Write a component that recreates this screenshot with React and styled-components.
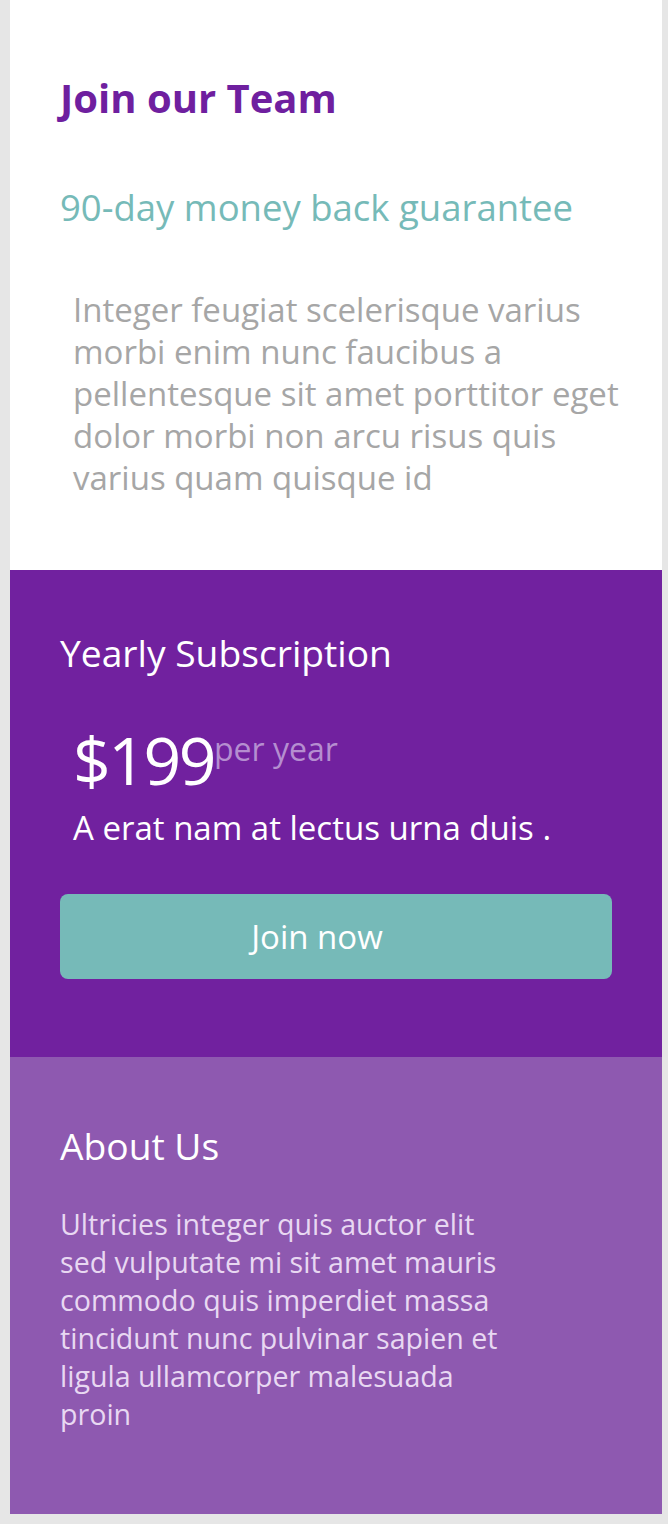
import React from 'react'
import styled, { createGlobalStyle } from 'styled-components'

const GlobalStyle = createGlobalStyle`
  html, body {
    margin: 0;
    padding: 0;
    background-color: #E6E6E6;
  }
  body {
    font-family: 'Open Sans', 'Noto Sans', sans-serif;
  }
`

const Page = styled.div`
  padding: 0 6px 10px 10px;
`

const Card = styled.main`
  background-color: #FFFFFF;
`

const Section = styled.section`
  background-color: ${props => props.bg || '#FFFFFF'};
  padding: ${props => props.pad || '0 50px'};
`

const Title = styled.h1`
  color: #6F1F9F;
  font-size: 40px;
  font-weight: 700;
  line-height: 50px;
  margin: 0;
`

const Subtitle = styled.h2`
  color: #76BAB8;
  font-size: 36.5px;
  font-weight: 400;
  line-height: 44px;
  margin: 62px 0 0;
`

const Lead = styled.p`
  color: #A6A6A6;
  font-size: 33px;
  line-height: 42px;
  margin: 60px -14px 0 0;
  padding: 0 0 0 13px;
`

const Heading = styled.h3`
  color: #FFFFFF;
  font-size: 37.2px;
  font-weight: 400;
  line-height: 44px;
  margin: 0;
`

const PriceRow = styled.div`
  display: flex;
  align-items: flex-start;
  margin: 48px 0 0 13px;
`

const Price = styled.span`
  color: #FFFFFF;
  font-size: 66px;
  line-height: 72px;
  letter-spacing: -2.5px;
`

const Period = styled.span`
  color: #B58ED0;
  font-size: 32px;
  line-height: 40px;
  margin-top: 6px;
`

const Note = styled.p`
  color: #FFFFFF;
  font-size: 33px;
  line-height: 40px;
  margin: 13px 0 0 13px;
`

const JoinButton = styled.button`
  display: block;
  width: 100%;
  height: 85px;
  margin-top: 46px;
  padding: 0 38px 0 0;
  border: none;
  border-radius: 8px;
  background-color: #76BAB8;
  color: #FFFFFF;
  font-family: inherit;
  font-size: 33px;
  cursor: pointer;
`

const AboutText = styled.p`
  color: #E8D8F2;
  font-size: 28.6px;
  line-height: 38px;
  margin: 37px 0 0;
  max-width: 452px;
`

const App = () => (
  <Page>
    <GlobalStyle />
    <Card>
      <Section pad="73px 50px 71px">
        <Title>Join our Team</Title>
        <Subtitle>90-day money back guarantee</Subtitle>
        <Lead>
          Integer feugiat scelerisque varius morbi enim nunc faucibus a
          pellentesque sit amet porttitor eget dolor morbi non arcu risus quis
          varius quam quisque id
        </Lead>
      </Section>
      <Section bg="#71219F" pad="61px 50px 78px">
        <Heading>Yearly Subscription</Heading>
        <PriceRow>
          <Price>$199</Price>
          <Period>per year</Period>
        </PriceRow>
        <Note>A erat nam at lectus urna duis .</Note>
        <JoinButton>Join now</JoinButton>
      </Section>
      <Section bg="#8E59B0" pad="67px 50px 81px">
        <Heading>About Us</Heading>
        <AboutText>
          Ultricies integer quis auctor elit sed vulputate mi sit amet mauris
          commodo quis imperdiet massa tincidunt nunc pulvinar sapien et ligula
          ullamcorper malesuada proin
        </AboutText>
      </Section>
    </Card>
  </Page>
)

export default App
